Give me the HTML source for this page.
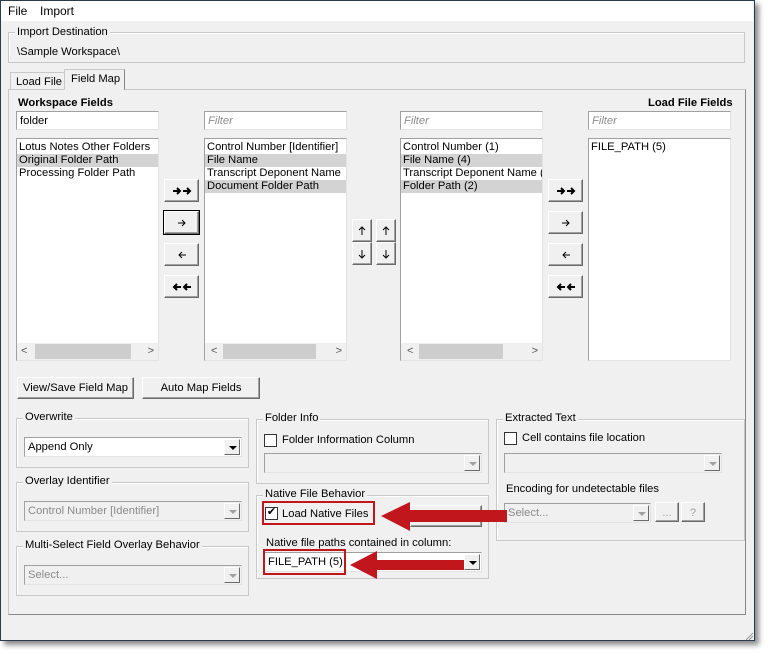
<!DOCTYPE html>
<html><head><meta charset="utf-8"><style>
*{box-sizing:border-box;margin:0;padding:0}
body{width:771px;height:656px;background:#fff;font-family:"Liberation Sans",sans-serif;font-size:11.2px;color:#000;position:relative;overflow:hidden}
.a{position:absolute;white-space:nowrap}
.win{left:0;top:0;width:755px;height:641px;background:#f0f0f0;border:1px solid #2b3a4d;box-shadow:4px 4px 5px rgba(0,0,0,.45)}
.menu{left:1px;top:1px;width:752px;height:20px;background:#fff}
.grp{position:absolute;border:1px solid #c8c8c8;box-shadow:inset 1px 1px 0 #fff}
.lg{position:absolute;background:#f0f0f0;padding:0 2px;top:-8px;left:6px;white-space:nowrap}
.inp{position:absolute;background:#fff;border:1px solid #a0a0a0;border-right-color:#e3e3e3;border-bottom-color:#e3e3e3;height:19px;padding:3px 3px;white-space:nowrap;overflow:hidden}
.ph{color:#8c8c8c;font-style:italic}
.list{position:absolute;background:#fff;border:1px solid #a0a0a0;border-right-color:#e3e3e3;border-bottom-color:#e3e3e3;overflow:hidden}
.list div{height:13px;line-height:13px;padding-left:2px;white-space:nowrap}
.sel{background:#d3d3d3}
.hs{position:absolute;left:0;right:0;bottom:0;height:17px!important;background:#f0f0f0;color:#555;font-size:11px}
.th{position:absolute;top:1px;height:15px!important;background:#cdcdcd}
.btn{position:absolute;background:#f0f0f0;border:1px solid;border-color:#fff #696969 #696969 #fff;box-shadow:inset -1px -1px 0 #a0a0a0;text-align:center;line-height:20px;white-space:nowrap}
.btn svg{position:absolute;left:50%;top:50%;transform:translate(-50%,-50%)}
.cmb{position:absolute;border:1px solid #a0a0a0;border-right-color:#e3e3e3;border-bottom-color:#e3e3e3;background:#fff;height:20px;padding:3px 3px;white-space:nowrap}
.cmb.dis{background:#f0f0f0;color:#8a8a8a}
.dd{position:absolute;right:1px;top:1px;width:16px;height:16px;background:#f0f0f0;border:1px solid;border-color:#fff #696969 #696969 #fff}
.dd:after{content:"";position:absolute;left:4px;top:6px;border-left:4px solid transparent;border-right:4px solid transparent;border-top:4px solid #000}
.dis .dd:after{border-top-color:#a0a0a0}
.cb{position:absolute;width:13px;height:13px;background:#fff;border:1px solid #333}
b{font-weight:bold}
</style></head><body>
<div class="a win"></div>
<div class="a menu"></div>
<div class="a" style="left:8px;top:4px;font-size:12px">File</div>
<div class="a" style="left:40px;top:4px;font-size:12px">Import</div>

<div class="grp" style="left:8px;top:32px;width:737px;height:31px"><span class="lg" style="top:-7px">Import Destination</span></div>
<div class="a" style="left:17px;top:46px">\Sample Workspace\</div>

<div class="a" style="left:10px;top:72px;width:55px;height:18px;border:1px solid #c8c8c8;border-bottom:none;background:#f0f0f0;padding:3px 0 0 5px">Load File</div>
<div class="a" style="left:64px;top:69px;width:61px;height:21px;border:1px solid #c8c8c8;border-right-color:#888;border-bottom:none;background:#f0f0f0;padding:3px 0 0 6px;z-index:2">Field Map</div>
<div class="a" style="left:8px;top:89px;width:738px;height:526px;border:1px solid #c8c8c8;border-right-color:#888;border-bottom-color:#888"></div>

<div class="a" style="left:18px;top:97px"><b>Workspace Fields</b></div>
<div class="a" style="left:648px;top:97px"><b>Load File Fields</b></div>

<div class="inp" style="left:16px;top:111px;width:143px">folder</div>
<div class="inp" style="left:204px;top:111px;width:143px"><span class="ph">Filter</span></div>
<div class="inp" style="left:400px;top:111px;width:143px"><span class="ph">Filter</span></div>
<div class="inp" style="left:588px;top:111px;width:143px"><span class="ph">Filter</span></div>

<div class="list" style="left:16px;top:138px;width:143px;height:223px;padding-top:2px">
<div>Lotus Notes Other Folders</div><div class="sel">Original Folder Path</div><div>Processing Folder Path</div>
<div class="hs"><span class="a" style="left:4px;top:2px">&lt;</span><div class="th" style="left:18px;width:96px"></div><span class="a" style="right:4px;top:2px">&gt;</span></div></div>
<div class="list" style="left:204px;top:138px;width:143px;height:223px;padding-top:2px">
<div>Control Number [Identifier]</div><div class="sel">File Name</div><div>Transcript Deponent Name</div><div class="sel">Document Folder Path</div>
<div class="hs"><span class="a" style="left:6px;top:2px">&lt;</span><div class="th" style="left:18px;width:93px"></div><span class="a" style="right:4px;top:2px">&gt;</span></div></div>
<div class="list" style="left:400px;top:138px;width:143px;height:223px;padding-top:2px">
<div>Control Number (1)</div><div class="sel">File Name (4)</div><div>Transcript Deponent Name (</div><div class="sel">Folder Path (2)</div>
<div class="hs"><span class="a" style="left:6px;top:2px">&lt;</span><div class="th" style="left:18px;width:84px"></div><span class="a" style="right:4px;top:2px">&gt;</span></div></div>
<div class="list" style="left:588px;top:138px;width:143px;height:223px;padding-top:2px">
<div>FILE_PATH (5)</div></div>

<div class="btn" style="left:164px;top:179px;width:35px;height:23px"><svg width="20" height="10"><path d="M1 5H8M5 2L8 5L5 8M11 5H18M15 2L18 5L15 8" stroke="#000" stroke-width="2" fill="none"/></svg></div>
<div class="btn" style="left:164px;top:211px;width:35px;height:23px;outline:1px solid #000"><svg width="10" height="8"><path d="M1 4H8M5 1L8 4L5 7" stroke="#000" stroke-width="1" fill="none"/></svg></div>
<div class="btn" style="left:164px;top:243px;width:35px;height:23px"><svg width="10" height="8"><path d="M9 4H2M5 1L2 4L5 7" stroke="#000" stroke-width="1" fill="none"/></svg></div>
<div class="btn" style="left:164px;top:275px;width:35px;height:23px"><svg width="20" height="10"><path d="M19 5H12M15 2L12 5L15 8M9 5H2M5 2L2 5L5 8" stroke="#000" stroke-width="2" fill="none"/></svg></div>
<div class="btn" style="left:548px;top:179px;width:35px;height:23px"><svg width="20" height="10"><path d="M1 5H8M5 2L8 5L5 8M11 5H18M15 2L18 5L15 8" stroke="#000" stroke-width="2" fill="none"/></svg></div>
<div class="btn" style="left:548px;top:211px;width:35px;height:23px"><svg width="10" height="8"><path d="M1 4H8M5 1L8 4L5 7" stroke="#000" stroke-width="1" fill="none"/></svg></div>
<div class="btn" style="left:548px;top:243px;width:35px;height:23px"><svg width="10" height="8"><path d="M9 4H2M5 1L2 4L5 7" stroke="#000" stroke-width="1" fill="none"/></svg></div>
<div class="btn" style="left:548px;top:275px;width:35px;height:23px"><svg width="20" height="10"><path d="M19 5H12M15 2L12 5L15 8M9 5H2M5 2L2 5L5 8" stroke="#000" stroke-width="2" fill="none"/></svg></div>
<div class="btn" style="left:352px;top:219px;width:20px;height:23px"><svg width="8" height="10"><path d="M4 9V1M1 4L4 1L7 4" stroke="#000" fill="none"/></svg></div>
<div class="btn" style="left:352px;top:242px;width:20px;height:23px"><svg width="8" height="10"><path d="M4 1V9M1 6L4 9L7 6" stroke="#000" fill="none"/></svg></div>
<div class="btn" style="left:376px;top:219px;width:20px;height:23px"><svg width="8" height="10"><path d="M4 9V1M1 4L4 1L7 4" stroke="#000" fill="none"/></svg></div>
<div class="btn" style="left:376px;top:242px;width:20px;height:23px"><svg width="8" height="10"><path d="M4 1V9M1 6L4 9L7 6" stroke="#000" fill="none"/></svg></div>

<div class="btn" style="left:17px;top:377px;width:117px;height:22px">View/Save Field Map</div>
<div class="btn" style="left:142px;top:377px;width:118px;height:22px">Auto Map Fields</div>

<div class="grp" style="left:16px;top:418px;width:233px;height:50px"><span class="lg">Overwrite</span></div>
<div class="cmb" style="left:24px;top:437px;width:218px">Append Only<div class="dd"></div></div>
<div class="grp" style="left:16px;top:482px;width:233px;height:50px"><span class="lg">Overlay Identifier</span></div>
<div class="cmb dis" style="left:24px;top:501px;width:218px">Control Number [Identifier]<div class="dd"></div></div>
<div class="grp" style="left:16px;top:546px;width:233px;height:50px"><span class="lg">Multi-Select Field Overlay Behavior</span></div>
<div class="cmb dis" style="left:24px;top:565px;width:218px">Select...<div class="dd"></div></div>

<div class="grp" style="left:256px;top:419px;width:233px;height:65px"><span class="lg">Folder Info</span></div>
<div class="cb" style="left:264px;top:434px"></div>
<div class="a" style="left:282px;top:434px">Folder Information Column</div>
<div class="cmb dis" style="left:264px;top:453px;width:218px"><div class="dd"></div></div>

<div class="grp" style="left:256px;top:495px;width:233px;height:84px"><span class="lg">Native File Behavior</span></div>
<div class="btn" style="left:410px;top:505px;width:72px;height:22px">Reposit...</div>
<div class="cb" style="left:265px;top:507px"></div>
<div class="a" style="left:265px;top:505px;font-size:11px;width:13px;text-align:center">✔</div>
<div class="a" style="left:282px;top:508px">Load Native Files</div>
<div class="a" style="left:262px;top:501px;width:113px;height:24px;border:2px solid #c0161c"></div>
<div class="a" style="left:266px;top:537px">Native file paths contained in column:</div>
<div class="cmb" style="left:264px;top:552px;width:218px">FILE_PATH (5)<div class="dd"></div></div>
<div class="a" style="left:263px;top:549px;width:83px;height:26px;border:2px solid #c0161c"></div>

<div class="grp" style="left:496px;top:419px;width:249px;height:122px"><span class="lg">Extracted Text</span></div>
<div class="cb" style="left:504px;top:432px"></div>
<div class="a" style="left:522px;top:432px">Cell contains file location</div>
<div class="cmb dis" style="left:504px;top:453px;width:218px"><div class="dd"></div></div>
<div class="a" style="left:506px;top:483px">Encoding for undetectable files</div>
<div class="cmb dis" style="left:504px;top:503px;width:147px">Select...<div class="dd"></div></div>
<div class="btn" style="left:655px;top:502px;width:24px;height:20px;color:#a0a0a0">...</div>
<div class="btn" style="left:681px;top:502px;width:24px;height:20px;color:#a0a0a0">?</div>

<svg class="a" style="left:0;top:0" width="771" height="656">
<polygon points="507,510 410,510 410,502 381,516 410,531 410,522 507,522" fill="#c0161c"/>
<polygon points="464,560 377,560 377,551 350,565 377,579 377,570 464,570" fill="#c0161c"/>
<g stroke="#999" stroke-width="1"><line x1="746" y1="640" x2="753" y2="633"/><line x1="749" y1="640" x2="753" y2="636"/></g>
</svg>
</body></html>
